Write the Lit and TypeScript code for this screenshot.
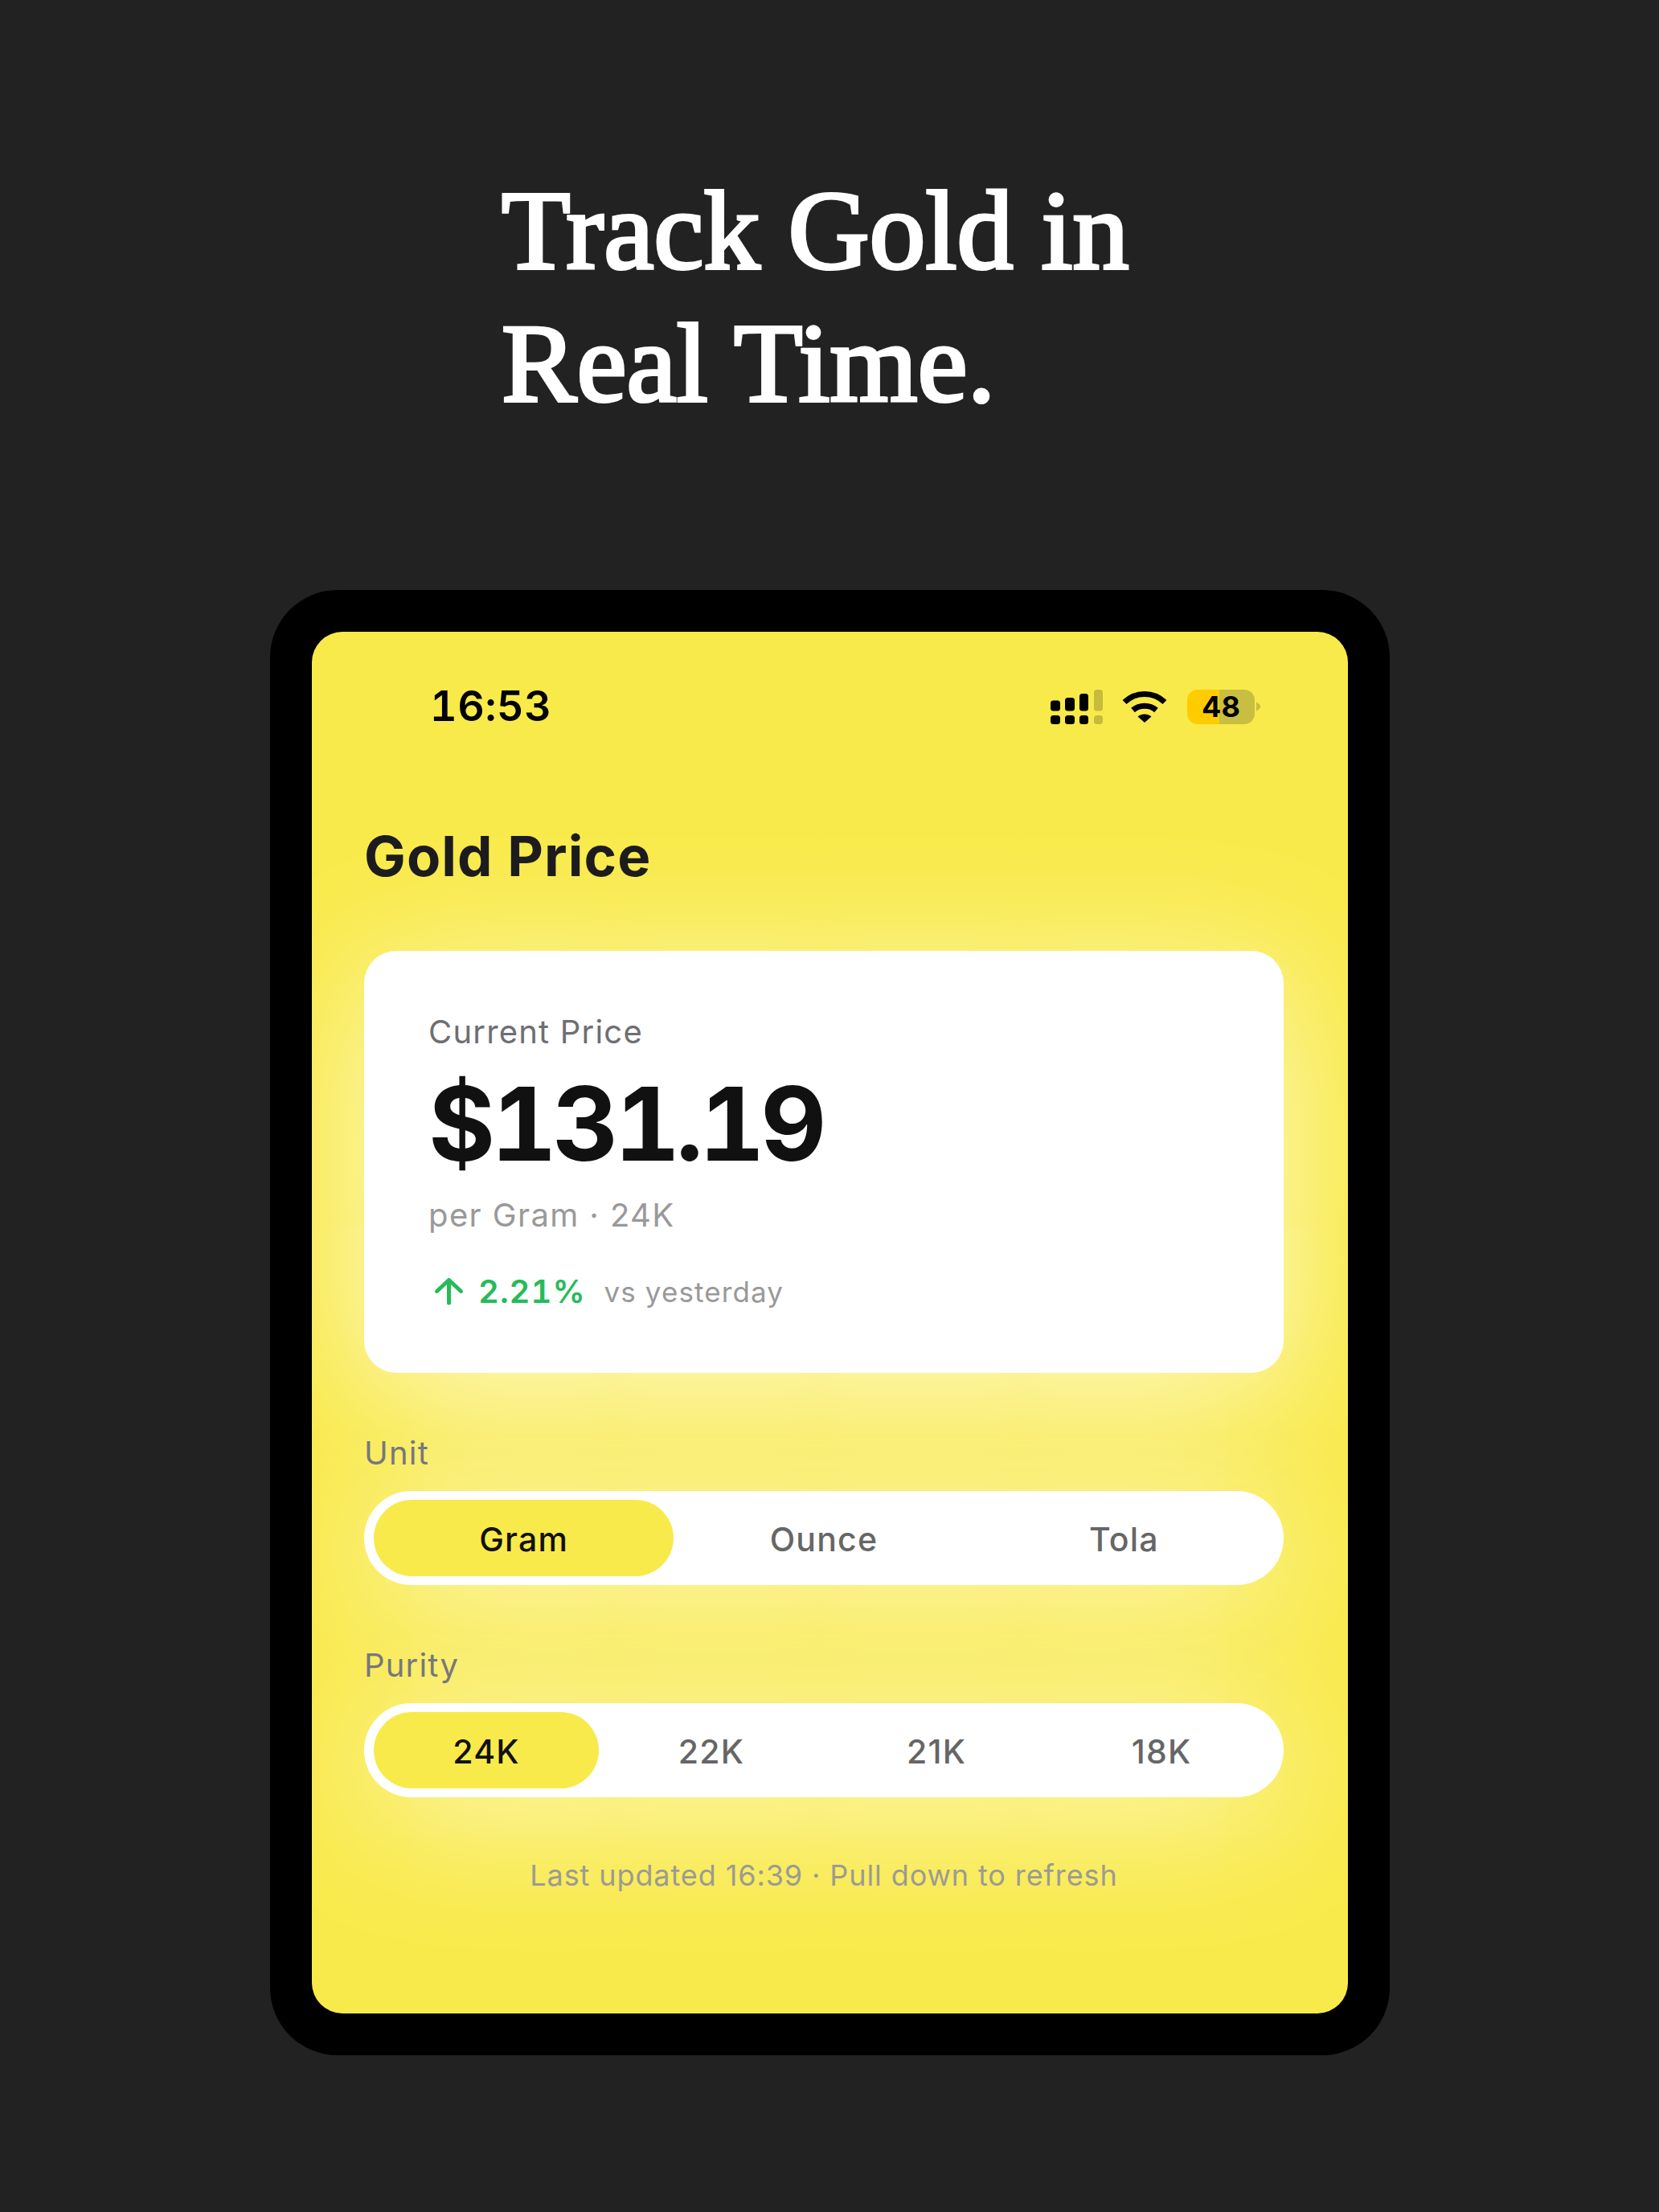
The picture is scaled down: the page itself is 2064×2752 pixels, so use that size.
import { LitElement, html, css } from "lit";
import { customElement, state } from "lit/decorators.js";

@customElement("app-root")
export class AppRoot extends LitElement {
  @state() unit = "Gram";
  @state() purity = "24K";

  static styles = css`
    :host { display: block; width: 2064px; height: 2752px; background: #222222; font-family: Inter, "Liberation Sans", sans-serif; overflow: hidden; }
    * { box-sizing: border-box; }
    .hero { margin: 0; padding: 204px 0 0 624px; height: 734px; font-family: "Liberation Serif", serif; font-weight: 400; font-size: 140px; line-height: 165px; color: #fff; -webkit-text-stroke: 4px #fff; }
    .device { width: 1393px; height: 1823px; margin-left: 336px; padding: 52px; background: #000; border-radius: 84px; }
    .screen { width: 1289px; height: 1719px; background: #f9ea4b; border-radius: 38px; overflow: hidden; padding: 63px 80px 0 65px; }
    .status { display: flex; align-items: center; height: 60px; padding: 0 29px 0 82px; justify-content: space-between; }
    .time { font-size: 52px; font-weight: 600; line-height: 60px; color: #000; font-feature-settings: "tnum"; letter-spacing: 0.6px; }
    .icons { display: flex; align-items: center; }
    .icons svg { display: block; }
    .wifi { margin: 0 25px 0 24px; }
    .battery { display: flex; align-items: center; gap: 2px; }
    .cell { width: 84px; height: 43px; border-radius: 13px; overflow: hidden; background: linear-gradient(90deg, #ffcc00 0 40px, #c8bf42 40px); display: flex; align-items: center; justify-content: center; font-size: 36px; font-weight: 700; color: #000; line-height: 43px; }
    .nub { width: 5px; height: 12px; background: #c8bf42; clip-path: polygon(0 0, 100% 35%, 100% 65%, 0 100%); }
    h1 { margin: 114px 0 76px; font-size: 69px; line-height: 84px; font-weight: 700; color: #1c1c1e; letter-spacing: 1.1px; }
    .card { height: 525px; padding: 77px 80px; border-radius: 40px; background: #fff; box-shadow: 0 30px 170px rgba(255,255,255,.75); }
    .cur { font-size: 40px; line-height: 48px; color: #6e6e73; letter-spacing: 1.2px; }
    .price { margin-top: 15px; font-size: 127px; line-height: 150px; font-weight: 700; color: #111; font-feature-settings: "tnum"; letter-spacing: -5.4px; }
    .per { margin-top: 15px; font-size: 40px; line-height: 48px; color: #999; letter-spacing: 1.4px; }
    .change { margin-top: 47px; display: flex; align-items: center; height: 48px; }
    .pct { margin-left: 16px; font-size: 40px; line-height: 48px; font-weight: 600; color: #26bb5a; font-feature-settings: "tnum"; letter-spacing: 1px; }
    .vs { margin-left: 23px; font-size: 35px; line-height: 48px; color: #999; letter-spacing: 1.1px; }
    .label { margin: 76px 0 23px; font-size: 40px; line-height: 48px; color: #77777c; letter-spacing: 1.2px; }
    .seg { display: flex; height: 117px; padding: 11px 12px; background: #fff; border-radius: 59px; box-shadow: 0 20px 170px rgba(255,255,255,.7); }
    .seg > div { flex: 1; display: flex; align-items: center; justify-content: center; padding-top: 2px; border-radius: 48px; font-size: 41px; font-weight: 500; color: #666; letter-spacing: 1.2px; }
    .seg > div.on { background: #f9ea4b; color: #111; }
    .note { margin-top: 75px; text-align: center; font-size: 36px; line-height: 44px; color: #9b9b93; letter-spacing: 0.9px; }
  `;

  private seg(items: string[], selected: string) {
    return html`<div class="seg">${items.map((i) => html`<div class=${i === selected ? "on" : ""}>${i}</div>`)}</div>`;
  }

  render() {
    return html`
      <h2 class="hero">Track Gold in<br />Real Time.</h2>
      <div class="device">
        <div class="screen">
          <div class="status">
            <span class="time">16:53</span>
            <div class="icons">
              <svg width="65" height="43" viewBox="0 0 65 43">
                <g fill="#000">
                  <rect x="0" y="32" width="12" height="11" rx="3.5" />
                  <rect x="18" y="32" width="12" height="11" rx="3.5" />
                  <rect x="36" y="32" width="11" height="11" rx="3.5" />
                  <rect x="0" y="13.5" width="12" height="13" rx="3.5" />
                  <rect x="18" y="10" width="12" height="16.5" rx="3.5" />
                  <rect x="36" y="5" width="11" height="21.5" rx="3.5" />
                </g>
                <g fill="#000" opacity=".2">
                  <rect x="54" y="32" width="11" height="11" rx="3.5" />
                  <rect x="54" y="0" width="11" height="26.5" rx="3.5" />
                </g>
              </svg>
              <svg class="wifi" width="56" height="40" viewBox="0 0 56 40">
                <g fill="none" stroke="#000" stroke-width="7">
                  <path d="M3 14.5C17 1 39 1 53 14.5" />
                  <path d="M13.5 24.5C21.5 17.5 34.5 17.5 42.5 24.5" />
                </g>
                <path d="M19.5 32.5C24 28.5 32 28.5 36.5 32.5L28 40Z" fill="#000" />
              </svg>
              <div class="battery">
                <div class="cell">48</div>
                <div class="nub"></div>
              </div>
            </div>
          </div>
          <h1>Gold Price</h1>
          <div class="card">
            <div class="cur">Current Price</div>
            <div class="price">$131.19</div>
            <div class="per">per Gram · 24K</div>
            <div class="change">
              <svg width="46" height="36" viewBox="0 0 46 36">
                <path d="M25.5 32V3.5M10.5 17.5L25.5 3.5L40.5 17.5" fill="none" stroke="#26bb5a" stroke-width="5" stroke-linecap="round" stroke-linejoin="round" />
              </svg>
              <span class="pct">2.21%</span>
              <span class="vs">vs yesterday</span>
            </div>
          </div>
          <div class="label">Unit</div>
          ${this.seg(["Gram", "Ounce", "Tola"], this.unit)}
          <div class="label">Purity</div>
          ${this.seg(["24K", "22K", "21K", "18K"], this.purity)}
          <div class="note">Last updated 16:39 · Pull down to refresh</div>
        </div>
      </div>
    `;
  }
}
